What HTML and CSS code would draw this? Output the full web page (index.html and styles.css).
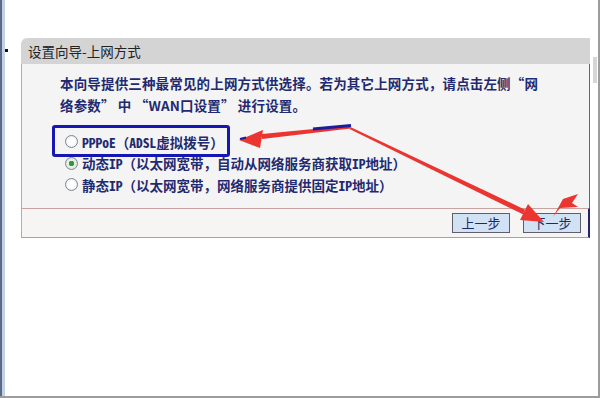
FILE: index.html
```html
<!DOCTYPE html>
<html lang="zh-CN">
<head>
  <meta charset="UTF-8">
  <meta name="viewport" content="width=device-width, initial-scale=1.0">
  <title>设置向导-上网方式</title>
  <link rel="stylesheet" href="styles.css">
</head>
<body>

  <div class="screen">
    <div class="edge"></div>
    <div class="gutter"><span class="dot"></span></div>

    <div class="wizard">
      <div class="wizard-head">设置向导-上网方式</div>
      <div class="wizard-body">
        <p class="intro">本向导提供三种最常见的上网方式供选择。若为其它上网方式，请点击左侧“网络参数” 中 “WAN口设置” 进行设置。</p>
        <div class="options">
          <label class="option marked"><span class="radio"></span>PPPoE（ADSL虚拟拨号）</label>
          <label class="option"><span class="radio checked"></span>动态IP（以太网宽带，自动从网络服务商获取IP地址）</label>
          <label class="option"><span class="radio"></span>静态IP（以太网宽带，网络服务商提供固定IP地址）</label>
        </div>
      </div>
      <div class="wizard-foot">
        <button type="button">上一步</button>
        <button type="button">下一步</button>
      </div>
    </div>

    <div class="rail"><span class="thumb"></span></div>
  </div>

  <!-- hand drawn arrows on top of the screenshot -->
  <svg class="arrows" viewBox="0 0 600 398" width="600" height="398">
    <polygon fill="#ea3530" points="350,125.5 350.5,128.5 262,139 262,134"/>
    <polygon fill="#ea3530" points="239,140 263,130 260,148"/>
    <line x1="313" y1="129" x2="351" y2="125.5" stroke="#1c1c9c" stroke-width="3"/>
    <line x1="240" y1="139" x2="246" y2="137.5" stroke="#1c1c9c" stroke-width="2"/>
    <polygon fill="#ea3530" points="349.6,128.9 350.4,127.1 525.1,209.7 522.9,214.3"/>
    <polygon fill="#ea3530" points="544,222 520,220 528,204"/>
    <polygon fill="#ea3530" points="553,217 563,199 578,194 572,203 578,207 560,208"/>
  </svg>

</body>
</html>
```

FILE: styles.css
```css
body {
  margin: 0;
  background: #ffffff;
  font-family: "Noto Sans CJK SC", sans-serif;
  overflow: hidden;
}
.screen {
  display: flex;
  height: 398px;
  box-sizing: border-box;
  border-right: 2px solid #9c9c9c;
  border-bottom: 2px solid #9c9c9c;
}
.edge {
  width: 5px;
  background: linear-gradient(to right, #5b6b87 0 2px, #c3d1e7 2px);
}
.gutter {
  width: 16px;
  padding-top: 49px;
}
.dot {
  display: block;
  width: 3px;
  height: 3px;
  background: #111;
}
.wizard {
  width: 569px;
  margin-top: 38px;
  align-self: flex-start;
}
.wizard-head {
  height: 26px;
  line-height: 26px;
  padding-left: 7px;
  background: #d4d4d4;
  border-top-left-radius: 6px;
  color: #222;
  font-size: 13.5px;
}
.wizard-body {
  background: #f4f4f4;
  border-left: 1px solid #c9a2a2;
  border-right: 1px solid #6f6262;
  padding: 8px 0 12.5px 38px;
}
.intro {
  margin: 0;
  width: 486px;
  line-height: 22px;
  font-size: 13.5px;
  letter-spacing: 0.16px;
  font-weight: bold;
  color: #1f2a70;
}
.options {
  margin-top: 15px;
  padding-left: 5px;
}
.option {
  position: relative;
  display: flex;
  align-items: center;
  gap: 4px;
  width: max-content;
  height: 21.5px;
  font-family: "Noto Sans Mono CJK SC", "Noto Sans CJK SC", sans-serif;
  font-size: 13.5px;
  font-weight: bold;
  color: #1f2a70;
}
.marked::before {
  content: "";
  position: absolute;
  left: -13px;
  right: -6px;
  top: -6px;
  bottom: -4.5px;
  border: 3px solid #1616b4;
  border-radius: 3px;
}
.radio {
  width: 11px;
  height: 11px;
  border: 1px solid #7d8891;
  border-radius: 50%;
  background: radial-gradient(circle, #ffffff 40%, #dedede);
}
.radio.checked {
  background: radial-gradient(circle, #2f9a3a 0 2.5px, #e9f2e9 3px, #d5dcd5);
}
.wizard-foot {
  display: flex;
  justify-content: flex-end;
  align-items: center;
  gap: 13px;
  height: 28px;
  padding-right: 7px;
  background: #f7f4f4;
  border-top: 1px solid #c9a2a2;
  border-left: 1px solid #c9a2a2;
  border-right: 2px solid #23236e;
  border-bottom: 1px solid #b89c9c;
}
button {
  width: 58px;
  height: 20px;
  padding: 0;
  background: #d0e2f4;
  border: 1px solid #5f5f6c;
  color: #1d2a66;
  font-family: "Noto Sans CJK SC", sans-serif;
  font-size: 13px;
  line-height: 18px;
}
.rail {
  flex: 1;
  padding: 57px 0 0 3px;
}
.thumb {
  display: block;
  width: 4px;
  height: 26px;
  background: #d6d6d6;
}
.arrows {
  position: absolute;
  top: 0;
  left: 0;
  pointer-events: none;
}
```
